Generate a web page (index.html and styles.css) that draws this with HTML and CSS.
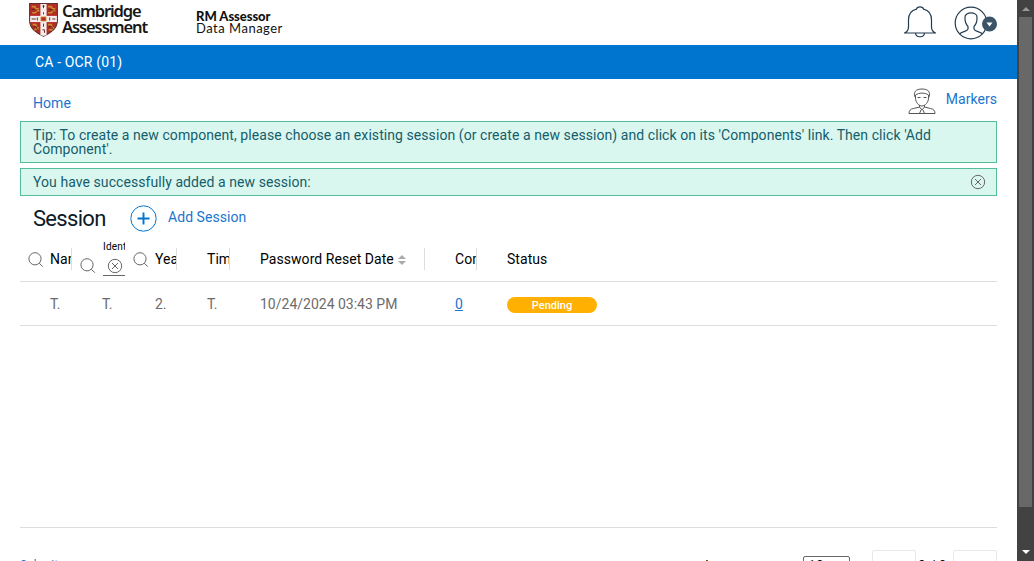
FILE: index.html
```html
<!DOCTYPE html>
<html lang="en">
<head>
<meta charset="utf-8">
<title>RM Assessor Data Manager</title>
<link rel="stylesheet" href="styles.css">
</head>
<body>
<svg class="defs" width="0" height="0">
  <symbol id="search" viewBox="0 0 16 16"><circle cx="7" cy="6.8" r="6.1"/><path d="M11.3 11.2 14.8 14.7"/></symbol>
  <symbol id="close" viewBox="0 0 16 16"><circle cx="8" cy="8" r="6.7"/><path d="M5 5 11 11M11 5 5 11"/></symbol>
</svg>
<div class="app">
  <main class="page">
    <header class="header">
      <svg class="shield" viewBox="0 0 28 33">
        <path d="M.5.5H27.5V17C27.5 25 21 29 14 32.3 7 29 .5 25 .5 17Z" fill="#b52b25" stroke="#5d302c"/>
        <path d="M11 1h6v30l-3 1-3-1Z" fill="#f4eeee"/>
        <path d="M1 12.5h26v6H1Z" fill="#f4eeee"/>
        <g fill="none" stroke="#c98d2c" stroke-width="1.5"><path d="M2.5 3.500h3l1 2h3M3 9.500h3l2-2h2M18.500 3.500h3l1 2h3M18.500 9.500h3l2-2h2M3.500 21h3l1 3h2M5 26l4-1M18.500 21h3l1 3h2M19 26l4 0"/></g>
        <g fill="none" stroke="#5d241c" stroke-width=".9"><path d="M2.500 6.200h3l2 2M19 6.200h3l2 2M4 23h3l1 3M19 23h3l1 2M13 3h2M14 2v3M14 9v2M2.500 15.500h4M8 14v3M20 14v3M22.500 15.500h3M14 20v3M13 26h2v3"/></g>
        <path d="M11.500 13.500h5v4h-5Z" fill="#b52b25" stroke="#d59b35" stroke-width=".8"/>
      </svg>
      <div class="brand">Cambridge<br>Assessment</div>
      <div class="product"><b>RM Assessor</b><br>Data Manager</div>
      <svg class="bell" viewBox="0 0 32 32"><path d="M0 27H32M.5 27C3 26 4.500 24 4.500 21V14C4.500 8 8 4.200 12.500 3.200 13 .2 19 .2 19.500 3.200 24 4.200 27.500 8 27.500 14V21C27.500 24 29 26 31.500 27M11.500 27C12 32 20 32 20.500 27"/></svg>
      <svg class="user" viewBox="0 0 44 34"><circle cx="17" cy="17" r="15.800"/><path d="M5.500 28C8 25.500 13.500 25.500 14 23V20.500C12 18.500 10.800 15 11 11 11 5.500 23 5.500 23 11 23.200 15 22 18.500 20 20.500V23C20.500 25.500 26 25.500 28.500 28"/><circle cx="35.500" cy="18" r="7.500" class="dot"/><path d="M32.500 16.500H38.500L35.500 20.500Z" class="tri"/></svg>
    </header>
    <div class="titlebar">CA - OCR (01)</div>
    <div class="content">
      <nav class="crumbs"><a>Home</a>
        <span class="markers"><svg viewBox="0 0 28 28"><path d="M7 9C5 4 8 1 14 1S23 4 21 9M7.500 7C11 4.500 17 4.500 20.500 7M7.500 7V10C7.500 14.500 11 18 14 18S20.500 14.500 20.500 10V7M9.500 9.500H12.500M15.500 9.500H18.500M11.500 17V19L5.500 20.500C2.500 21 1 22.500 1 25.500H27C27 22.500 25.500 21 22.500 20.500L16.500 19V17M11.500 19 14 22 16.500 19M13 22 11.500 25.500M15 22 16.500 25.500"/></svg><a>Markers</a></span>
      </nav>
      <div class="notice tip">Tip: To create a new component, please choose an existing session (or create a new session) and click on its 'Components' link. Then click 'Add Component'.</div>
      <div class="notice success">You have successfully added a new session:<svg class="ico"><use href="#close"/></svg></div>
      <div class="heading"><h1>Session</h1><svg viewBox="0 0 27 27"><circle cx="13.500" cy="13.500" r="12.700"/><path d="M7.500 13.500H19.500M13.500 7.500V19.500" stroke-width="1.900"/></svg><a>Add Session</a></div>
      <div class="row head">
        <div class="cell"><svg class="ico"><use href="#search"/></svg><span class="label cut">Name</span></div>
        <div class="cell"><svg class="ico low"><use href="#search"/></svg><div class="filter"><small>Identifier</small><svg class="ico"><use href="#close"/></svg></div></div>
        <div class="cell"><svg class="ico"><use href="#search"/></svg><span class="label cut">Year</span></div>
        <div class="cell"><span class="label cut solo">Time</span></div>
        <div class="cell"><span class="label wide">Password Reset Date<svg viewBox="0 0 8 10"><path d="M0 4 4 0 8 4ZM0 6 4 10 8 6Z"/></svg></span></div>
        <div class="cell"><span class="label cut solo">Components</span></div>
        <div class="cell"><span class="label status">Status</span></div>
      </div>
      <div class="row data">
        <span>T.</span><span>T.</span><span>2.</span><span>T.</span><span>10/24/2024 03:43 PM</span><span><a>0</a></span><span><b class="pill">Pending</b></span>
      </div>
      <div class="blank"></div>
      <footer class="footer">
        <a class="export">Submit</a>
        <span class="per">Items per page</span>
        <span class="select">10</span>
        <span class="pager">‹</span><span class="count">0 / 0</span><span class="pager">›</span>
      </footer>
    </div>
  </main>
  <aside class="scroll"><i class="up"></i><div class="thumb"></div><i class="down"></i></aside>
</div>
</body>
</html>
```
FILE: styles.css
```css
* { box-sizing: border-box; }
body { margin: 0; font: 14px/14px Roboto, sans-serif; letter-spacing: .05px; color: #000; background: #fff; overflow: hidden; }
svg { display: block; fill: none; flex: none; }
a { color: #1a75cf; }
.defs { position: absolute; }
.app { display: flex; height: 561px; overflow: hidden; }
.page { width: 1017px; height: 561px; overflow: hidden; }
.header { height: 45px; display: flex; align-items: flex-start; padding-left: 29px; }
.shield { width: 29px; height: 34px; margin-top: 3px; }
.brand { width: 138px; padding: 3px 0 0 4px; font: 600 16.500px/16px "Noto Sans", sans-serif; letter-spacing: -1.1px; color: #171717; }
.product { flex: 1; padding-top: 10px; font: 13px/12px Lato, sans-serif; letter-spacing: .5px; color: #111; }
.product b { font-weight: 900; letter-spacing: -.05px; }
.bell { width: 32px; height: 32px; margin: 6px 18px 0 0; stroke: #233b50; stroke-width: 1.2; }
.user { width: 44px; height: 34px; margin: 6px 19px 0 0; stroke: #233b50; stroke-width: 1.2; }
.user .dot { fill: #3b5468; stroke: none; }
.user .tri { fill: #fff; stroke: none; }
.titlebar { height: 34px; padding-left: 35px; line-height: 34px; color: #fff; background: #0075d0; font-weight: 400; letter-spacing: .15px; }
.content { padding: 0 20px; }
.crumbs { height: 42px; padding: 17px 0 0 13px; display: flex; justify-content: space-between; align-items: flex-start; }
.markers { display: flex; gap: 10px; margin-top: -8px; }
.markers svg { width: 28px; height: 28px; stroke: #555; stroke-width: 1; }
.markers a { padding-top: 4px; }
.notice { border: 1px solid #54bd9c; background: #d9f7ef; color: #155d6b; padding: 6px 12px; letter-spacing: .068px; }
.tip { height: 42px; margin-bottom: 5px; }
.success { height: 28px; display: flex; justify-content: space-between; padding-right: 10px; }
.success .ico { margin-top: -1px; }
.ico { width: 16px; height: 16px; stroke: #666; stroke-width: 1; }
.heading { display: flex; height: 37px; padding: 9px 0 0 13px; }
h1 { font: 400 22px/27px Roboto, sans-serif; letter-spacing: -.7px; margin: 0; width: 97px; color: #0b1a26; }
.heading svg { width: 27px; height: 27px; stroke: #0075d0; stroke-width: 1; }
.heading a { margin: 5px 0 0 11px; }
.row { display: grid; grid-template-columns: 52px 53px 52px 53px 195px 52px 1fr; border-bottom: 1px solid #ddd; }
.head { height: 49px; }
.cell { display: flex; align-items: flex-start; padding-left: 8px; min-width: 0; }
.cell > .ico { margin-top: 19px; }
.cell > .ico.low { margin: 25px 0 0 0; }
.label { margin: 15px 0 0 6px; height: 22px; line-height: 23px; }
.cut { width: 22px; overflow: hidden; border-right: 1px solid #ddd; }
.solo { margin-left: 22px; width: 23px; }
.wide { display: flex; align-items: center; gap: 4px; margin-left: 22px; width: 165px; border-right: 1px solid #ddd; white-space: nowrap; }
.wide svg { width: 8px; height: 10px; fill: #aaa; margin-top: 2px; }
.status { margin-left: 22px; }
.filter { width: 22px; height: 35px; margin: 8px 0 0 7px; overflow: hidden; border-bottom: 1px solid #666; }
.filter small { display: block; font-size: 10px; line-height: 12px; letter-spacing: .2px; }
.filter .ico { margin: 5px 0 0 4px; }
.data { height: 44px; color: #6c6c6c; align-items: center; letter-spacing: 0; }
.data > span { padding-left: 30px; }
.data a { text-decoration: underline; }
.pill { display: block; width: 90px; height: 16px; margin-top: 2px; border-radius: 8px; background: #ffb000; color: #fff; text-align: center; font: 500 11px/17px Roboto, sans-serif; letter-spacing: 0; }
.blank { height: 202px; border-bottom: 1px solid #ddd; }
.footer { display: flex; height: 60px; padding-top: 22px; line-height: 14px; }
.export { width: 685px; padding-top: 8px; font-size: 12px; }
.per { width: 98px; padding-top: 9px; white-space: nowrap; }
.select { width: 47px; height: 22px; border: 1px solid #666; border-radius: 2px; margin: 6px 22px 0 0; padding: 2px 4px; }
.pager { width: 44px; height: 35px; border: 1px solid #e8e8e8; border-radius: 2px; color: #aaa; text-align: center; padding-top: 5px; }
.count { width: 37px; padding: 9px 0 0 2px; white-space: nowrap; }
.scroll { width: 17px; background: #424242; display: flex; flex-direction: column; align-items: center; }
.up { border: 4px solid transparent; border-top: 0; border-bottom: 4px solid #999; margin: 7px 0 6px; }
.thumb { width: 13px; height: 490px; background: #686868; }
.down { border: 4px solid transparent; border-bottom: 0; border-top: 4px solid #fff; margin-top: 43px; }
```
